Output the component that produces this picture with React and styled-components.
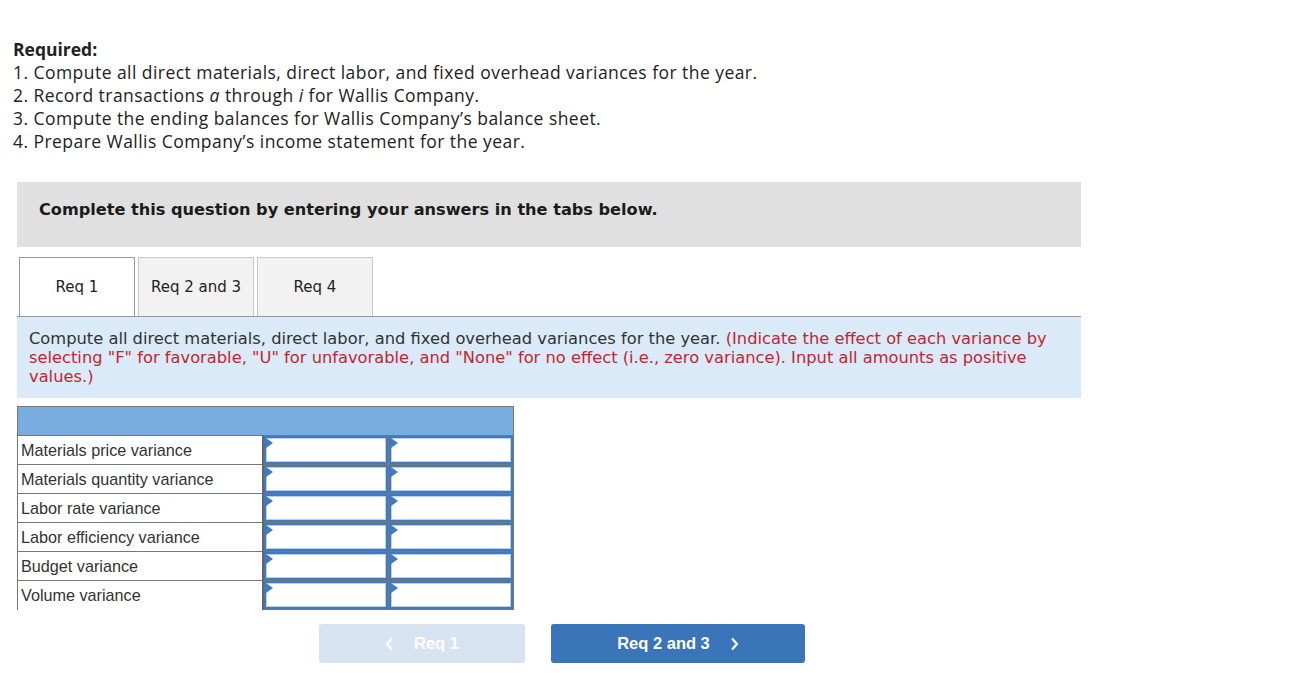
import React from "react";
import styled, { createGlobalStyle } from "styled-components";

const Global = createGlobalStyle`
  body {
    margin: 0;
    background: #fff;
    font-family: "Open Sans", "Liberation Sans", sans-serif;
    color: #222;
  }
`;

const Page = styled.div`
  width: 1290px;
  height: 673px;
  overflow: hidden;
`;

const Required = styled.div`
  padding: 38px 0 0 13px;
  font-family: "Open Sans", "Liberation Sans", sans-serif;
  font-size: 17.5px;
  letter-spacing: 0.45px;
  line-height: 23px;
  color: #222;
`;

const ReqTitle = styled.div`
  font-weight: 700;
  letter-spacing: 0;
`;

const Question = styled.div`
  margin: 29px 0 0 17px;
  width: 1064px;
`;

const Banner = styled.div`
  height: 65px;
  background: #e0e0e0;
  display: flex;
  align-items: center;
  padding: 0 0 10px 22px;
  box-sizing: border-box;
  font-family: "DejaVu Sans", Verdana, sans-serif;
  font-weight: 700;
  font-size: 16.15px;
  color: #1b1b1b;
`;

const Tabs = styled.div`
  display: flex;
  gap: 3px;
  margin-top: 10px;
  padding-left: 2px;
  border-bottom: 1px solid #999;
`;

const Tab = styled.div`
  width: 116px;
  height: 59px;
  box-sizing: border-box;
  display: flex;
  align-items: center;
  justify-content: center;
  font-family: "DejaVu Sans", Verdana, sans-serif;
  font-size: 15px;
  color: #222;
  border: 1px solid ${(p) => (p.$active ? "#999" : "#c8c8c8")};
  border-bottom: none;
  background: ${(p) => (p.$active ? "#fff" : "#f2f2f2")};
  margin-bottom: ${(p) => (p.$active ? "-1px" : "0")};
`;

const Info = styled.div`
  background: #daeaf8;
  padding: 12px;
  font-family: "DejaVu Sans", Verdana, sans-serif;
  font-size: 16.3px;
  line-height: 19px;
  color: #333;
`;

const Red = styled.span`
  color: #c1272d;
`;

const TableWrap = styled.div`
  margin: 8px 0 0 17px;
`;

const Table = styled.table`
  border-collapse: collapse;
  font-family: "Liberation Sans", Arial, sans-serif;
  font-size: 16.2px;
  color: #333;
`;

const HeadCell = styled.th`
  height: 28px;
  background: #79acdf;
  border: 1px solid #777;
  padding: 0;
`;

const Label = styled.td`
  width: 245px;
  height: 28px;
  padding: 0 0 0 3px;
  box-sizing: border-box;
  border: 1px solid #777;
  border-bottom: ${(p) => (p.$last ? "none" : "1px solid #777")};
  border-right: 2px solid #666;
  white-space: nowrap;
`;

const InputCell = styled.td`
  width: 124px;
  padding: 0;
  border: 1px solid #777;
`;

const Field = styled.div`
  height: 28px;
  box-sizing: border-box;
  border: 2px solid #4079be;
  box-shadow: inset 0 0 0 1px #b7d2f0;
  background: #fff;
  position: relative;
`;

const Flag = styled.span`
  position: absolute;
  left: 0;
  top: 0;
  width: 0;
  height: 0;
  border-top: 5px solid transparent;
  border-bottom: 5px solid transparent;
  border-left: 7px solid #3f7bc4;
`;

const Nav = styled.div`
  display: flex;
  gap: 26px;
  margin: 14px 0 0 319px;
`;

const NavButton = styled.div`
  width: ${(p) => p.$w}px;
  height: 39px;
  border-radius: 3px;
  background: ${(p) => (p.$disabled ? "#d8e3f1" : "#3a74b9")};
  color: #fff;
  display: flex;
  align-items: center;
  justify-content: center;
  gap: 20px;
  font-family: "Liberation Sans", Arial, sans-serif;
  font-weight: 700;
  font-size: 16.5px;
`;

const Chevron = ({ dir }) => (
  <svg width="9" height="14" viewBox="0 0 9 14">
    <path
      d={dir === "left" ? "M7 1.5 L2 7 L7 12.5" : "M2 1.5 L7 7 L2 12.5"}
      fill="none"
      stroke="#fff"
      strokeWidth="2.2"
    />
  </svg>
);

const rows = [
  "Materials price variance",
  "Materials quantity variance",
  "Labor rate variance",
  "Labor efficiency variance",
  "Budget variance",
  "Volume variance",
];

export default function App() {
  return (
    <Page>
      <Global />
      <Required>
        <ReqTitle>Required:</ReqTitle>
        <div>1. Compute all direct materials, direct labor, and fixed overhead variances for the year.</div>
        <div>
          2. Record transactions <i>a</i> through <i>i</i> for Wallis Company.
        </div>
        <div>3. Compute the ending balances for Wallis Company’s balance sheet.</div>
        <div>4. Prepare Wallis Company’s income statement for the year.</div>
      </Required>
      <Question>
        <Banner>Complete this question by entering your answers in the tabs below.</Banner>
        <Tabs>
          <Tab $active>Req 1</Tab>
          <Tab>Req 2 and 3</Tab>
          <Tab>Req 4</Tab>
        </Tabs>
        <Info>
          Compute all direct materials, direct labor, and fixed overhead variances for the year.{" "}
          <Red>
            (Indicate the effect of each variance by selecting "F" for favorable, "U" for unfavorable, and
            "None" for no effect (i.e., zero variance). Input all amounts as positive values.)
          </Red>
        </Info>
      </Question>
      <TableWrap>
        <Table>
          <thead>
            <tr>
              <HeadCell colSpan={3} />
            </tr>
          </thead>
          <tbody>
            {rows.map((r, i) => (
              <tr key={r}>
                <Label $last={i === rows.length - 1}>{r}</Label>
                <InputCell>
                  <Field>
                    <Flag />
                  </Field>
                </InputCell>
                <InputCell>
                  <Field>
                    <Flag />
                  </Field>
                </InputCell>
              </tr>
            ))}
          </tbody>
        </Table>
      </TableWrap>
      <Nav>
        <NavButton $w={206} $disabled>
          <Chevron dir="left" />
          <span>Req 1</span>
        </NavButton>
        <NavButton $w={254}>
          <span>Req 2 and 3</span>
          <Chevron dir="right" />
        </NavButton>
      </Nav>
    </Page>
  );
}
